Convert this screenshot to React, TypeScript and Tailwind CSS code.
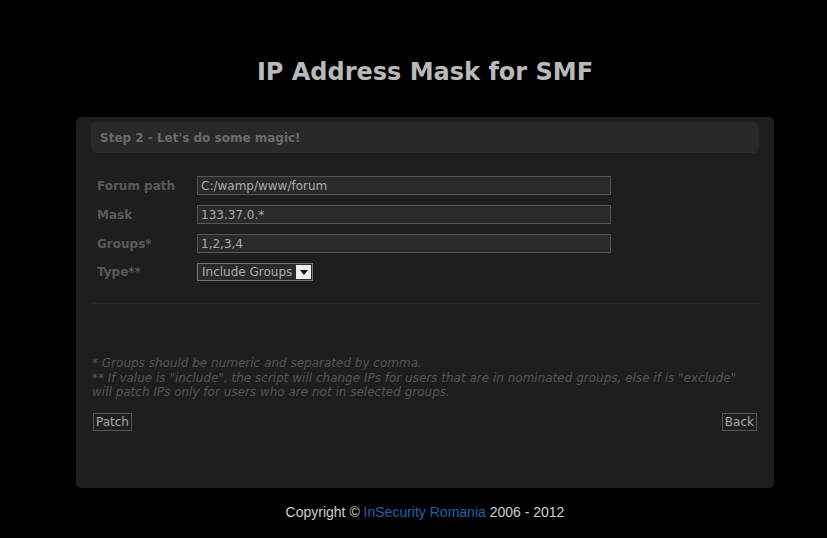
import React from "react";

export default function App() {
  const v = { fontFamily: '"DejaVu Sans", Verdana, sans-serif' };
  return (
    <div className="w-[827px] h-[538px] bg-black flex flex-col items-center pl-[23px]" style={v}>
      <h1 className="mt-[56px] h-[33px] text-[24px] leading-[33px] font-bold text-[#b9b9b9]">IP Address Mask for SMF</h1>
      <div className="mt-[28px] w-[698px] h-[371px] bg-[#1e1e1e] rounded-[5px] px-[15px] pt-[5px] flex flex-col">
        <div className="h-[31px] bg-[#292929] rounded-[5px] px-[9px] flex items-center text-[12px] font-bold text-[#6b6b6b]">
          Step 2 - Let's do some magic!
        </div>
        <div className="mt-[23px] flex flex-col gap-[10px] pl-[6px] text-[12px]">
          {[
            ["Forum path", "C:/wamp/www/forum"],
            ["Mask", "133.37.0.*"],
            ["Groups*", "1,2,3,4"],
          ].map(([l, val]) => (
            <div key={l} className="flex items-center h-[19px]">
              <div className="w-[100px] font-bold text-[#5a5a5a]">{l}</div>
              <div className="w-[414px] h-[19px] border border-[#555] bg-[#2a2a2a] text-[#aaa] px-[3px] leading-[18px]">{val}</div>
            </div>
          ))}
          <div className="flex items-center h-[18px]">
            <div className="w-[100px] font-bold text-[#5a5a5a]">Type**</div>
            <div className="h-[18px] border border-[#777] bg-[#2a2a2a] text-[#aaa] flex items-center pl-[4px]">
              <span className="leading-[16px]">Include Groups</span>
              <span className="ml-[4px] w-[15px] h-[14px] bg-[#eee] flex items-center justify-center mr-[1px]">
                <svg width="8" height="5" viewBox="0 0 8 5"><path d="M0 0h8L4 5z" fill="#111" /></svg>
              </span>
            </div>
          </div>
        </div>
        <div className="mt-[22px] h-px bg-[#272727]" />
        <div className="mt-[52px] pl-[1px] text-[12px] italic leading-[14.5px] text-[#555] pr-[8px]">
          <div>* Groups should be numeric and separated by comma.</div>
          <div>** If value is "include", the script will change IPs for users that are in nominated groups, else if is "exclude" will patch IPs only for users who are not in selected groups.</div>
        </div>
        <div className="mt-[13px] flex justify-between px-[2px] text-[12px]">
          <button className="h-[18px] px-[2px] border border-[#555] text-[#aaa] leading-[16px]">Patch</button>
          <button className="h-[18px] px-[2px] border border-[#555] text-[#aaa] leading-[16px]">Back</button>
        </div>
      </div>
      <div className="mt-[14px] text-[14px] text-[#d0d0d0]" style={{ fontFamily: '"Liberation Sans", Arial, sans-serif' }}>
        Copyright © <span className="text-[#2060a8]">InSecurity Romania</span> 2006 - 2012
      </div>
    </div>
  );
}
